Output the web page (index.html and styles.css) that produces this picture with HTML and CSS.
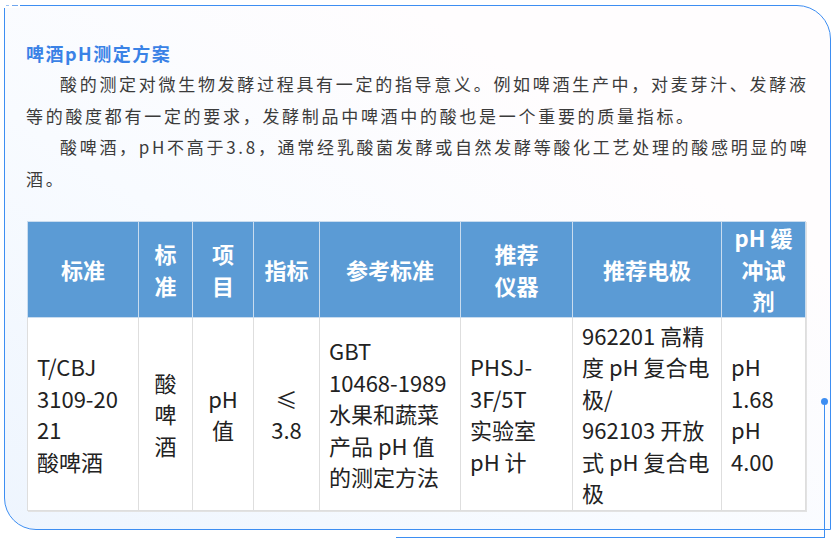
FILE: index.html
```html
<!DOCTYPE html>
<html lang="zh-CN">
<head>
<meta charset="utf-8">
<title>啤酒pH测定方案</title>
<link rel="stylesheet" href="styles.css">
</head>
<body>
<div class="card">
  <h2 class="title">啤酒pH测定方案</h2>
  <p class="para">酸的测定对微生物发酵过程具有一定的指导意义。例如啤酒生产中，对麦芽汁、发酵液等的酸度都有一定的要求，发酵制品中啤酒中的酸也是一个重要的质量指标。</p>
  <p class="para">酸啤酒，pH不高于3.8，通常经乳酸菌发酵或自然发酵等酸化工艺处理的酸感明显的啤酒。</p>
  <table class="spec">
    <colgroup>
      <col class="c1"><col class="c2"><col class="c3"><col class="c4"><col class="c5"><col class="c6"><col class="c7"><col class="c8">
    </colgroup>
    <thead>
      <tr>
        <th>标准</th>
        <th>标<br>准</th>
        <th>项<br>目</th>
        <th>指标</th>
        <th>参考标准</th>
        <th>推荐<br>仪器</th>
        <th>推荐电极</th>
        <th>pH 缓<br>冲试<br>剂</th>
      </tr>
    </thead>
    <tbody>
      <tr>
        <td>T/CBJ<br>3109-20<br>21<br>酸啤酒</td>
        <td class="center">酸<br>啤<br>酒</td>
        <td class="center">pH<br>值</td>
        <td class="center">≤<br>3.8</td>
        <td>GBT<br>10468-1989<br>水果和蔬菜<br>产品 pH 值<br>的测定方法</td>
        <td>PHSJ-<br>3F/5T<br>实验室<br>pH 计</td>
        <td>962201 高精<br>度 pH 复合电<br>极/<br>962103 开放<br>式 pH 复合电<br>极</td>
        <td>pH<br>1.68<br>pH<br>4.00</td>
      </tr>
    </tbody>
  </table>
</div>
<div class="connector"></div>
</body>
</html>
```
FILE: styles.css
```css
html, body {
  margin: 0;
  padding: 0;
  background: #ffffff;
}

body {
  width: 838px;
  height: 544px;
  position: relative;
  overflow: hidden;
  font-family: "Noto Sans CJK SC", "Noto Sans", sans-serif;
}

.card {
  position: relative;
  box-sizing: border-box;
  margin: 5px 0 0 4px;
  width: 827px;
  height: 525px;
  border: 1px solid #3d8ef2;
  border-radius: 0 34px 0 32px;
  padding: 32px 0 0 21px;
  background: linear-gradient(to top right, #eef5fe 0%, #f8fbff 40%, #fffdfe 75%);
}

.card::before {
  content: "";
  position: absolute;
  top: -1px;
  left: -1px;
  width: 16px;
  height: 3px;
  background:
    linear-gradient(to right, transparent 2px, #9cc2f2 2px 5px, transparent 5px 8px, #6fa6ef 8px 14px, transparent 14px) top left / 100% 1px no-repeat,
    #ffffff;
}

.title {
  margin: 0;
  font-size: 18px;
  line-height: 30px;
  font-weight: bold;
  color: #3a82e6;
  letter-spacing: 1.5px;
}

.para {
  margin: 0;
  width: 792px;
  font-size: 17px;
  line-height: 31.5px;
  letter-spacing: 2.7px;
  text-indent: 34px;
  color: #3b3b3b;
}

.spec {
  margin: 27px 0 0 1px;
  width: 778px;
  table-layout: fixed;
  border-collapse: collapse;
  font-size: 22px;
  line-height: 31.5px;
  box-shadow: 1px 1px 0 #e2e2e2;
}

.c1 { width: 111px; }
.c2 { width: 54px; }
.c3 { width: 61px; }
.c4 { width: 66px; }
.c5 { width: 141px; }
.c6 { width: 112px; }
.c7 { width: 149px; }
.c8 { width: 84px; }

.spec th {
  height: 95px;
  padding: 0;
  background: #5b9bd5;
  color: #ffffff;
  font-weight: bold;
  text-align: center;
  vertical-align: middle;
  border: 1px solid #c9dcef;
}

.spec td {
  height: 192px;
  padding: 0 8px 0 9px;
  background: #ffffff;
  color: #222222;
  text-align: left;
  vertical-align: middle;
  border: 1px solid #dedede;
}

.spec td.center {
  text-align: center;
  padding: 0;
}

.connector {
  position: absolute;
  left: 396px;
  top: 401px;
  width: 428px;
  height: 136px;
  border-right: 1px solid #3d8ef2;
  border-bottom: 1px solid #3d8ef2;
}

.connector::before {
  content: "";
  position: absolute;
  right: -4px;
  top: -3px;
  width: 7px;
  height: 7px;
  border-radius: 50%;
  background: #3d8ef2;
}
```
